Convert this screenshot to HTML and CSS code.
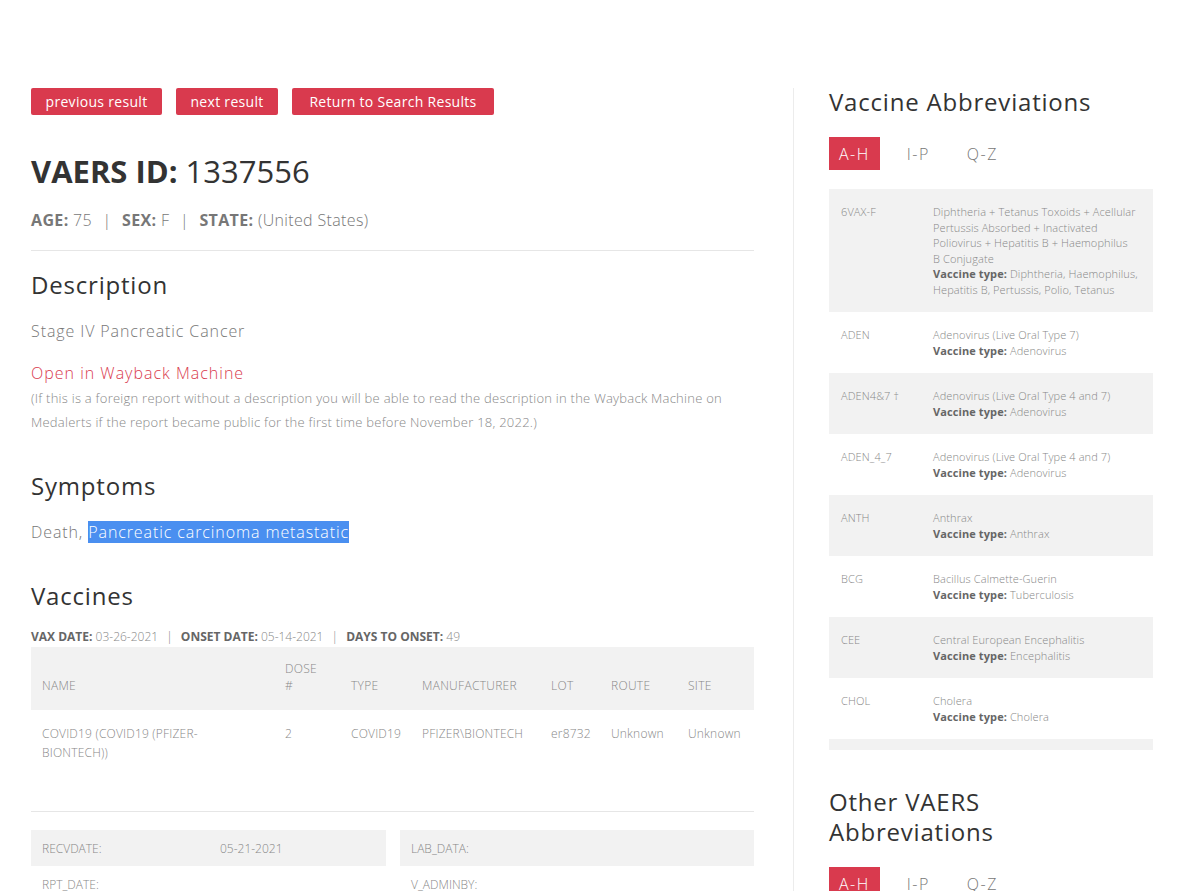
FILE: index.html
```html
<!DOCTYPE html>
<html lang="en">
<head>
<meta charset="utf-8">
<title>VAERS ID 1337556</title>
<link rel="stylesheet" href="styles.css">
</head>
<body>
<div class="page">
  <main class="main">
    <div class="btns">
      <a class="btn">previous result</a>
      <a class="btn">next result</a>
      <a class="btn">Return to Search Results</a>
    </div>
    <h1 class="title"><b>VAERS ID:</b> 1337556</h1>
    <p class="meta"><b>AGE:</b> 75 <span class="sep">|</span> <b>SEX:</b> F <span class="sep">|</span> <b>STATE:</b> (United States)</p>
    <hr class="rule">
    <h2 class="h2 h2-desc">Description</h2>
    <p class="lead">Stage IV Pancreatic Cancer</p>
    <a class="wayback">Open in Wayback Machine</a>
    <p class="note">(If this is a foreign report without a description you will be able to read the description in the Wayback Machine on Medalerts if the report became public for the first time before November 18, 2022.)</p>
    <h2 class="h2 h2-sec">Symptoms</h2>
    <p class="lead symptoms">Death, <span class="sel">Pancreatic carcinoma metastatic</span></p>
    <h2 class="h2 h2-sec">Vaccines</h2>
    <p class="vaxline"><b>VAX DATE:</b> 03-26-2021 <span class="sep">|</span> <b>ONSET DATE:</b> 05-14-2021 <span class="sep">|</span> <b>DAYS TO ONSET:</b> 49</p>
    <table class="vtable">
      <colgroup>
        <col class="c-name"><col class="c-dose"><col class="c-type"><col class="c-man"><col class="c-lot"><col class="c-route"><col class="c-site">
      </colgroup>
      <thead>
        <tr><th>NAME</th><th>DOSE<br>#</th><th>TYPE</th><th>MANUFACTURER</th><th>LOT</th><th>ROUTE</th><th>SITE</th></tr>
      </thead>
      <tbody>
        <tr><td>COVID19 (COVID19 (PFIZER-<br>BIONTECH))</td><td>2</td><td>COVID19</td><td>PFIZER\BIONTECH</td><td>er8732</td><td>Unknown</td><td>Unknown</td></tr>
      </tbody>
    </table>
    <hr class="rule rule-2">
    <div class="fields">
      <div class="fcol">
        <div class="frow"><span class="fk">RECVDATE:</span><span class="fv">05-21-2021</span></div>
        <div class="frow"><span class="fk">RPT_DATE:</span><span class="fv"></span></div>
        <div class="frow"><span class="fk">CAGE_YR:</span><span class="fv">75</span></div>
      </div>
      <div class="fcol">
        <div class="frow"><span class="fk">LAB_DATA:</span><span class="fv"></span></div>
        <div class="frow"><span class="fk">V_ADMINBY:</span><span class="fv"></span></div>
        <div class="frow"><span class="fk">V_FUNDBY:</span><span class="fv"></span></div>
      </div>
    </div>
  </main>
  <aside class="side">
    <h2 class="h2 side-h">Vaccine Abbreviations</h2>
    <div class="tabs">
      <span class="tab active">A-H</span><span class="tab">I-P</span><span class="tab">Q-Z</span>
    </div>
    <div class="abbr-list">
      <div class="arow"><span class="ak">6VAX-F</span><span class="ad">Diphtheria + Tetanus Toxoids + Acellular<br>Pertussis Absorbed + Inactivated<br>Poliovirus + Hepatitis B + Haemophilus<br>B Conjugate<br><b>Vaccine type:</b> Diphtheria, Haemophilus,<br>Hepatitis B, Pertussis, Polio, Tetanus</span></div>
      <div class="arow"><span class="ak">ADEN</span><span class="ad">Adenovirus (Live Oral Type 7)<br><b>Vaccine type:</b> Adenovirus</span></div>
      <div class="arow"><span class="ak">ADEN4&amp;7 †</span><span class="ad">Adenovirus (Live Oral Type 4 and 7)<br><b>Vaccine type:</b> Adenovirus</span></div>
      <div class="arow"><span class="ak">ADEN_4_7</span><span class="ad">Adenovirus (Live Oral Type 4 and 7)<br><b>Vaccine type:</b> Adenovirus</span></div>
      <div class="arow"><span class="ak">ANTH</span><span class="ad">Anthrax<br><b>Vaccine type:</b> Anthrax</span></div>
      <div class="arow"><span class="ak">BCG</span><span class="ad">Bacillus Calmette-Guerin<br><b>Vaccine type:</b> Tuberculosis</span></div>
      <div class="arow"><span class="ak">CEE</span><span class="ad">Central European Encephalitis<br><b>Vaccine type:</b> Encephalitis</span></div>
      <div class="arow"><span class="ak">CHOL</span><span class="ad">Cholera<br><b>Vaccine type:</b> Cholera</span></div>
      <div class="arow"><span class="ak">COVID19</span><span class="ad">COVID19<br><b>Vaccine type:</b> COVID19</span></div>
    </div>
    <h2 class="h2 side-h2">Other VAERS Abbreviations</h2>
    <div class="tabs">
      <span class="tab active">A-H</span><span class="tab">I-P</span><span class="tab">Q-Z</span>
    </div>
  </aside>
</div>
</body>
</html>
```
FILE: styles.css
```css
* { box-sizing: border-box; }
html, body { margin: 0; padding: 0; background: #fff; }
body {
  font-family: "Open Sans", "DejaVu Sans", sans-serif;
  color: #777;
}
.page {
  display: flex;
  align-items: flex-start;
  padding: 88px 0 0 31px;
}
.main { width: 723px; flex: none; }
.side {
  flex: none;
  margin-left: 39px;
  border-left: 1px solid #ececec;
  padding-left: 35px;
  width: 360px;
  min-height: 900px;
}
.btns { display: flex; gap: 14px; height: 27px; }
.btn {
  display: inline-flex;
  align-items: center;
  justify-content: center;
  height: 27px;
  padding: 0 14px;
  background: #d93a4e;
  color: #fff;
  border-radius: 2px;
  font-size: 14px;
  letter-spacing: 0.3px;
}
.btn:nth-child(1) { width: 131px; }
.btn:nth-child(2) { width: 102px; }
.btn:nth-child(3) { width: 202px; }
.title {
  margin: 36px 0 0;
  font-size: 31px;
  line-height: 40px;
  font-weight: 500;
  color: #333;
}
.title b { font-weight: 700; }
.meta {
  margin: 17px 0 0;
  font-size: 16px;
  line-height: 24px;
  font-weight: 300;
  color: #777;
  letter-spacing: 0.35px;
}
.meta b { font-weight: 700; }
.sep { margin: 0 6px; }
.rule { border: 0; border-top: 1px solid #e6e6e6; margin: 18px 0 0; height: 0; }
.h2 {
  font-size: 24px;
  line-height: 30px;
  font-weight: 400;
  color: #333;
  margin: 0;
  letter-spacing: 0.8px;
}
.h2-desc { margin-top: 19px; }
.h2-sec { margin-top: 37px; }
.lead {
  margin: 19px 0 0;
  font-size: 16px;
  line-height: 24px;
  font-weight: 300;
  color: #777;
  letter-spacing: 0.9px;
}
.wayback {
  display: block;
  margin-top: 18px;
  font-size: 16px;
  line-height: 24px;
  font-weight: 300;
  color: #d93a4e;
  letter-spacing: 1px;
}
.note {
  margin: 1px 0 0;
  font-size: 13px;
  line-height: 24px;
  font-weight: 300;
  color: #888;
  letter-spacing: 0.25px;
}
.sel { background: #4a8ff0; color: #fff; }
.vaxline {
  margin: 17px 0 0;
  font-size: 12px;
  line-height: 18px;
  font-weight: 300;
  color: #888;
}
.vaxline b { font-weight: 700; color: #666; }
.vaxline .sep { margin: 0 5px; }
.vtable {
  width: 723px;
  border-collapse: collapse;
  table-layout: fixed;
  margin-top: 1px;
  font-size: 12px;
  color: #888;
}
.c-name { width: 243px; }
.c-dose { width: 66px; }
.c-type { width: 71px; }
.c-man { width: 129px; }
.c-lot { width: 60px; }
.c-route { width: 77px; }
.c-site { width: 77px; }
.vtable th {
  background: #f2f2f2;
  text-align: left;
  font-weight: 300;
  vertical-align: bottom;
  line-height: 17px;
  padding: 13px 11px 16px;
  white-space: nowrap;
  letter-spacing: 0.3px;
}
.vtable td {
  vertical-align: top;
  line-height: 19px;
  padding: 14px 11px 15px;
  font-weight: 300;
  white-space: nowrap;
  letter-spacing: 0.2px;
}
.rule-2 { margin-top: 34px; }
.fields {
  margin-top: 18px;
  display: grid;
  grid-template-columns: 355px 354px;
  column-gap: 14px;
}
.frow {
  display: flex;
  align-items: center;
  height: 36px;
  padding: 0 11px;
  font-size: 12px;
  font-weight: 300;
  color: #888;
}
.frow:nth-child(odd) { background: #f2f2f2; }
.fk { width: 178px; flex: none; }
.side-h { margin-top: -1px; }
.tabs { display: flex; margin-top: 20px; height: 33px; }
.tab {
  display: inline-flex;
  align-items: center;
  padding: 0 10px;
  margin-right: 17px;
  font-size: 16px;
  font-weight: 300;
  color: #777;
  letter-spacing: 1.5px;
}
.tab.active { background: #d93a4e; color: #fff; }
.abbr-list {
  margin-top: 19px;
  width: 324px;
  height: 561px;
  overflow: hidden;
}
.arow {
  display: flex;
  padding: 15px 12px 15px 12px;
  font-size: 11px;
  line-height: 15.5px;
  color: #888;
  font-weight: 300;
  letter-spacing: 0.1px;
}
.arow:nth-child(odd) { background: #f2f2f2; }
.ak { width: 92px; flex: none; }
.ad { flex: 1; white-space: nowrap; }
.ad b { font-weight: 700; color: #666; }
.side-h2 { margin-top: 37px; width: 300px; }
```
